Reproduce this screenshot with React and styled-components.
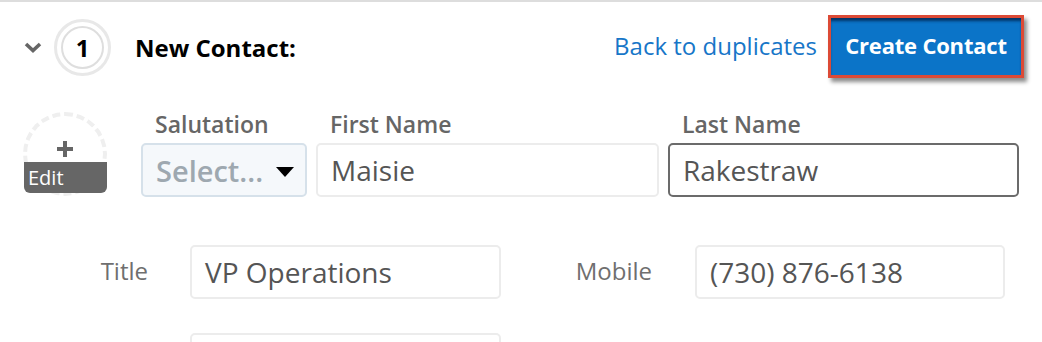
import React from "react";
import styled, { createGlobalStyle } from "styled-components";

const GlobalStyle = createGlobalStyle`
    body {
        margin: 0;
        background: #fff;
        font-family: 'Open Sans', 'Liberation Sans', sans-serif;
    }
`;

const Page = styled.div`
    border-top: 2px solid #dddddd;
    width: 1042px;
`;

const Header = styled.div`
    display: flex;
    align-items: center;
    height: 90px;
    padding: 0 18px 0 24px;
`;

const Chevron = styled.svg`
    width: 18px;
    height: 11px;
    display: block;
`;

const StepCircle = styled.div`
    width: 57px;
    height: 57px;
    box-sizing: border-box;
    border: 3px solid #e8e8e8;
    border-radius: 50%;
    margin-left: 12px;
    display: flex;
    align-items: center;
    justify-content: center;
`;

const StepInner = styled.div`
    width: 43px;
    height: 43px;
    box-sizing: border-box;
    border: 2px solid #dedede;
    border-radius: 50%;
    display: flex;
    align-items: center;
    justify-content: center;
    font-size: 24px;
    font-weight: 700;
    color: #000;
`;

const Heading = styled.h2`
    margin: 0 0 0 24px;
    font-size: 24px;
    font-weight: 700;
    color: #000;
    flex: 1;
`;

const BackLink = styled.a`
    font-size: 24px;
    color: #1776c8;
    text-decoration: none;
    margin-right: 11px;
    margin-top: -3px;
`;

const Highlight = styled.div`
    border: 3px solid #dc4a36;
    box-shadow: 3px 4px 4px rgba(0, 0, 0, 0.45);
    display: flex;
    margin-top: -2px;
`;

const PrimaryButton = styled.button`
    width: 190px;
    height: 57px;
    border: none;
    background: #0b74c8;
    box-shadow: inset 0 4px 3px -1px rgba(0, 30, 70, 0.75);
    color: #fff;
    font-family: 'Open Sans', 'Liberation Sans', sans-serif;
    font-size: 22px;
    font-weight: 700;
    letter-spacing: -0.2px;
    padding: 0 0 3px;
    cursor: pointer;
`;

const NameRow = styled.div`
    display: flex;
    align-items: flex-end;
    padding: 18px 0 0 23px;
`;

const Avatar = styled.div`
    position: relative;
    width: 84px;
    height: 84px;
    margin: 0 34px 1px 0;
    box-sizing: border-box;
    border: 4px dashed #efefef;
    border-radius: 50%;
    display: flex;
    justify-content: center;
`;

const Plus = styled.svg`
    width: 18px;
    height: 18px;
    margin-top: 24px;
`;

const EditTag = styled.div`
    position: absolute;
    left: -3px;
    right: -4px;
    top: 46px;
    height: 31px;
    background: #666;
    border-radius: 0 0 6px 6px;
    color: #fff;
    font-size: 20px;
    line-height: 31px;
    padding-left: 4px;
`;

const Field = styled.div`
    display: flex;
    flex-direction: column;
    width: ${p => p.$w}px;
    margin-right: 9px;
`;

const TopLabel = styled.label`
    font-size: 23px;
    font-weight: 600;
    color: #666;
    line-height: 28px;
    margin: 0 0 5px 14px;
`;

const Box = styled.div`
    height: 54px;
    box-sizing: border-box;
    border: 2px solid ${p => (p.$focused ? "#6b6b6b" : "#ececec")};
    border-radius: 5px;
    background: #fff;
    display: flex;
    align-items: center;
    padding-left: 13px;
    font-size: 28px;
    color: #555;
`;

const SelectBox = styled(Box)`
    background: #f5f8fb;
    border-color: #d6e1ea;
    justify-content: space-between;
    padding-right: 11px;
`;

const Placeholder = styled.span`
    font-size: 29px;
    font-weight: 600;
    color: #9ea8b0;
`;

const Caret = styled.svg`
    width: 18px;
    height: 10px;
    margin-top: 4px;
`;

const DetailGrid = styled.div`
    display: grid;
    grid-template-columns: 190px 311px 194px 310px;
    grid-auto-rows: 54px;
    row-gap: 34px;
    margin-top: 48px;
`;

const SideLabel = styled.label`
    font-size: 24px;
    color: #6f6f6f;
    display: flex;
    align-items: center;
    justify-content: flex-end;
    padding-right: ${p => p.$pad}px;
    margin-top: -4px;
`;

const App = () => {
    return (
        <>
            <GlobalStyle />
            <Page>
                <Header>
                    <Chevron viewBox="0 0 18 11">
                        <polyline points="2,2 9,8.5 16,2" fill="none" stroke="#666" strokeWidth="3.6" />
                    </Chevron>
                    <StepCircle>
                        <StepInner>1</StepInner>
                    </StepCircle>
                    <Heading>New Contact:</Heading>
                    <BackLink href="#">Back to duplicates</BackLink>
                    <Highlight>
                        <PrimaryButton>Create Contact</PrimaryButton>
                    </Highlight>
                </Header>

                <NameRow>
                    <Avatar>
                        <Plus viewBox="0 0 18 18">
                            <path d="M9 1v16M1 9h16" stroke="#666" strokeWidth="4" />
                        </Plus>
                        <EditTag>Edit</EditTag>
                    </Avatar>
                    <Field $w={166}>
                        <TopLabel>Salutation</TopLabel>
                        <SelectBox>
                            <Placeholder>Select...</Placeholder>
                            <Caret viewBox="0 0 18 10">
                                <polygon points="0,0 18,0 9,10" fill="#000" />
                            </Caret>
                        </SelectBox>
                    </Field>
                    <Field $w={343}>
                        <TopLabel>First Name</TopLabel>
                        <Box>Maisie</Box>
                    </Field>
                    <Field $w={351}>
                        <TopLabel>Last Name</TopLabel>
                        <Box $focused>Rakestraw</Box>
                    </Field>
                </NameRow>

                <DetailGrid>
                    <SideLabel $pad={42}>Title</SideLabel>
                    <Box>VP Operations</Box>
                    <SideLabel $pad={43}>Mobile</SideLabel>
                    <Box>(730) 876-6138</Box>
                    <SideLabel $pad={42} />
                    <Box />
                </DetailGrid>
            </Page>
        </>
    );
};

export default App;
